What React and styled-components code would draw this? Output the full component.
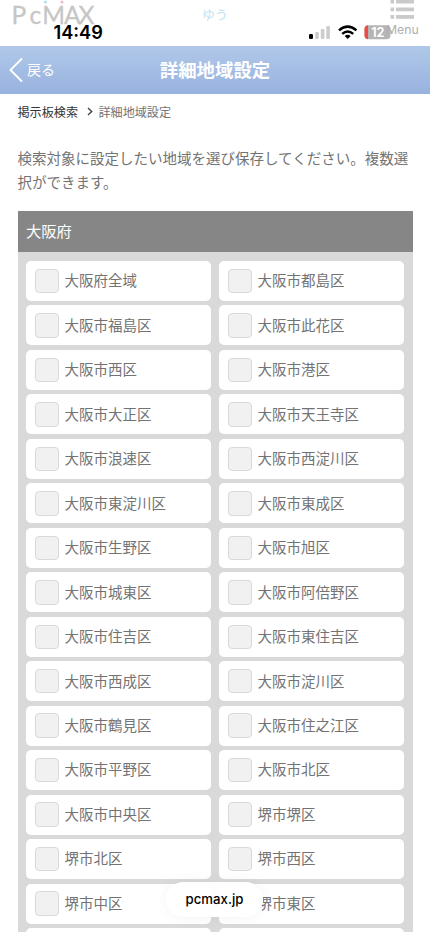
import React, { useState } from 'react';
import styled, { createGlobalStyle } from 'styled-components';

const areas = [
  '大阪府全域', '大阪市都島区',
  '大阪市福島区', '大阪市此花区',
  '大阪市西区', '大阪市港区',
  '大阪市大正区', '大阪市天王寺区',
  '大阪市浪速区', '大阪市西淀川区',
  '大阪市東淀川区', '大阪市東成区',
  '大阪市生野区', '大阪市旭区',
  '大阪市城東区', '大阪市阿倍野区',
  '大阪市住吉区', '大阪市東住吉区',
  '大阪市西成区', '大阪市淀川区',
  '大阪市鶴見区', '大阪市住之江区',
  '大阪市平野区', '大阪市北区',
  '大阪市中央区', '堺市堺区',
  '堺市北区', '堺市西区',
  '堺市中区', '堺市東区',
  '', '',
];

const Logo = () => (
  <LogoSvg width="86" height="34" viewBox="0 0 86 34">
    <text
      x="-0.5 17.4 30.2 52 66.6"
      y="23.5"
      fill="#c6c6c6"
      stroke="#c6c6c6"
      strokeWidth="0.3"
      strokeLinejoin="round"
      fontFamily="Lato, sans-serif"
      fontSize="24.5"
    >
      PcMAX
    </text>
    <circle cx="33.5" cy="2" r="1.6" fill="#b5e0e8" />
    <circle cx="50" cy="2" r="1.6" fill="#f3bccb" />
  </LogoSvg>
);

const StatusIcons = () => (
  <StatusSvg width="86" height="18" viewBox="0 0 86 18">
    <rect x="1" y="10" width="4" height="5" rx="1.2" fill="#000" />
    <rect x="7.2" y="8" width="3.6" height="7" rx="1.2" fill="#ccc" />
    <rect x="12.8" y="5" width="3.6" height="10" rx="1.2" fill="#ccc" />
    <rect x="18.3" y="2" width="3.6" height="13" rx="1.2" fill="#ccc" />
    <g fill="none" stroke="#000" strokeWidth="2.5">
      <path d="M31 6.4 Q39.7 -1.2 48.4 6.4" />
      <path d="M34.2 9.9 Q39.7 5.2 45.2 9.9" />
    </g>
    <path d="M36.7 12 Q39.7 9.6 42.7 12 L39.7 15.1 Z" fill="#000" />
    <clipPath id="battery">
      <rect x="56.5" y="1.3" width="26" height="13.9" rx="4" />
    </clipPath>
    <g clipPath="url(#battery)">
      <rect x="56" y="1" width="27" height="15" fill="#b5b5b5" />
      <rect x="56" y="1" width="4" height="15" fill="#ed4b46" />
    </g>
    <path d="M83.2 6 q2.6 2.3 0 4.6 Z" fill="#b5b5b5" />
    <text x="69.8" y="12.9" textAnchor="middle" fill="#fff" fontFamily="Inter, sans-serif" fontSize="12.5" fontWeight="700">12</text>
  </StatusSvg>
);

const Area = ({ name }) => {
  const [checked, setChecked] = useState(false);

  return (
    <AreaLabel>
      <CheckBox type="checkbox" checked={checked} onChange={() => setChecked(!checked)} />
      <span>{name}</span>
    </AreaLabel>
  );
};

const App = () => {
  return (
    <Container>
      <GlobalStyle />
      <TopBar>
        <Logo />
        <UserName>ゆう</UserName>
        <Clock>14:49</Clock>
        <StatusIcons />
        <MenuIcon width="25" height="20" viewBox="0 0 25 20">
          <g fill="#cacaca">
            <rect x="0.5" y="0" width="3.6" height="3.5" />
            <rect x="6" y="0" width="18" height="3.5" />
            <rect x="0.5" y="7.5" width="3.6" height="3.8" />
            <rect x="6" y="7.5" width="18" height="3.8" />
            <rect x="0.5" y="15" width="3.6" height="3.8" />
            <rect x="6" y="15" width="18" height="3.8" />
          </g>
        </MenuIcon>
        <MenuText>Menu</MenuText>
      </TopBar>

      <Header>
        <BackBtn>
          <svg width="14" height="26" viewBox="0 0 14 26">
            <path d="M13 1.5 L1.5 13 L13 24.5" fill="none" stroke="#fff" strokeWidth="1.9" />
          </svg>
          <span>戻る</span>
        </BackBtn>
        <Title>詳細地域設定</Title>
      </Header>

      <Breadcrumb>
        <Parent>掲示板検索</Parent>
        <svg width="6" height="9" viewBox="0 0 6 9">
          <path d="M1 1 L4.7 4.5 L1 8" fill="none" stroke="#444" strokeWidth="1.4" />
        </svg>
        <span>詳細地域設定</span>
      </Breadcrumb>

      <Guide>検索対象に設定したい地域を選び保存してください。複数選択ができます。</Guide>

      <Panel>
        <PanelTitle>大阪府</PanelTitle>
        <AreaGrid>
          {areas.map((name, i) => (
            <Area key={i} name={name} />
          ))}
        </AreaGrid>
      </Panel>

      <UrlPill>pcmax.jp</UrlPill>
    </Container>
  );
};

export default App;

const GlobalStyle = createGlobalStyle`
  * {
    box-sizing: border-box;
  }

  body {
    margin: 0;
    background-color: #fff;
    font-family: 'Noto Sans CJK JP', sans-serif;
  }
`;

const Container = styled.div`
  width: 430px;
  height: 932px;
  overflow: hidden;
  position: relative;
  color: #737373;
`;

const TopBar = styled.div`
  height: 46px;
  position: relative;
`;

const LogoSvg = styled.svg`
  position: absolute;
  left: 12px;
  top: 0;
  overflow: visible;
`;

const UserName = styled.div`
  position: absolute;
  left: 202px;
  top: 4px;
  font-size: 13px;
  line-height: 20px;
  color: #c2e4f2;
`;

const Clock = styled.div`
  position: absolute;
  left: 53.5px;
  top: 22px;
  font-family: Inter, sans-serif;
  font-size: 18.2px;
  font-weight: 600;
  line-height: 20px;
  color: #000;
`;

const StatusSvg = styled.svg`
  position: absolute;
  left: 307.5px;
  top: 23.7px;
`;

const MenuIcon = styled.svg`
  position: absolute;
  left: 390px;
  top: 0;
`;

const MenuText = styled.div`
  position: absolute;
  left: 386px;
  top: 21px;
  font-family: Inter, sans-serif;
  font-size: 12.3px;
  line-height: 17px;
  color: #b0b0b0;
`;

const Header = styled.div`
  height: 47.5px;
  background: linear-gradient(#b0c8e8, #98b2df);
  color: #fff;
  display: grid;
  grid-template-columns: 1fr auto 1fr;
  align-items: center;
`;

const BackBtn = styled.div`
  display: flex;
  align-items: center;
  gap: 4px;
  padding-left: 9px;
  font-size: 14px;
  cursor: pointer;

  span {
    line-height: 20px;
    padding-bottom: 2px;
  }
`;

const Title = styled.h1`
  margin: 0;
  padding-bottom: 2px;
  font-size: 18.4px;
  font-weight: 700;
  line-height: 28px;
`;

const Breadcrumb = styled.div`
  display: flex;
  align-items: center;
  height: 36px;
  padding-left: 17.5px;
  font-size: 12.1px;

  svg {
    margin: 0 5px 0 9.5px;
  }
`;

const Parent = styled.span`
  color: #333;
`;

const Guide = styled.p`
  margin: 16.5px 17px 0 17.5px;
  font-size: 14.5px;
  line-height: 23.5px;
`;

const Panel = styled.div`
  margin: 18px 17.5px 0;
  background-color: #d9d9d9;
`;

const PanelTitle = styled.div`
  height: 41px;
  padding-left: 8.5px;
  background-color: #868686;
  color: #fff;
  font-size: 15.3px;
  line-height: 38px;
`;

const AreaGrid = styled.div`
  display: grid;
  grid-template-columns: 1fr 1fr;
  grid-auto-rows: 40px;
  gap: 4.47px 8px;
  padding: 9px 8.5px;
`;

const AreaLabel = styled.label`
  display: flex;
  align-items: center;
  gap: 5.5px;
  padding-left: 8.5px;
  background-color: #fff;
  border-radius: 5px;
  font-size: 14.5px;
  line-height: 22px;
  cursor: pointer;

  span {
    padding-bottom: 1.4px;
  }
`;

const CheckBox = styled.input`
  appearance: none;
  width: 24.5px;
  height: 24.5px;
  margin: 0;
  border: 1px solid #d9d9d9;
  border-radius: 4px;
  background-color: ${(props) => (props.checked ? '#98b2df' : '#f1f1f1')};
`;

const UrlPill = styled.div`
  position: absolute;
  left: 166px;
  top: 882px;
  width: 97px;
  height: 35px;
  border-radius: 18px;
  background-color: rgba(255, 255, 255, 0.96);
  box-shadow: 0 0 14px rgba(0, 0, 0, 0.05);
  font-family: Inter, sans-serif;
  font-size: 13.2px;
  font-weight: 500;
  line-height: 35px;
  text-align: center;
  color: #000;
`;
